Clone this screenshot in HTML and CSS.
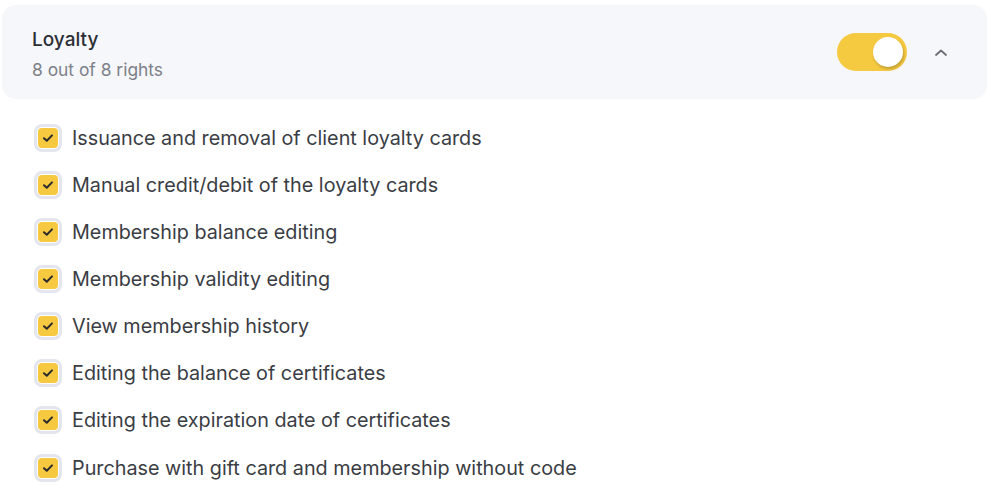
FILE: index.html
```html
<!DOCTYPE html>
<html>
<head>
<meta charset="utf-8">
<link rel="stylesheet" href="styles.css">
</head>
<body>
<div class="group">
  <div class="header">
    <div class="titles">
      <div class="title">Loyalty</div>
      <div class="subtitle">8 out of 8 rights</div>
    </div>
    <div class="controls">
      <div class="toggle"><div class="knob"></div></div>
      <svg class="chevron" width="14" height="9" viewBox="0 0 14 9"><path d="M2 7 L7 2.5 L12 7" fill="none" stroke="#6b6e76" stroke-width="1.8" stroke-linecap="round" stroke-linejoin="round"/></svg>
    </div>
  </div>
  <ul class="list">
    <li class="row"><span class="check"><span class="box"><svg width="12" height="10" viewBox="0 0 12 10"><path d="M2 5.2 L4.8 7.8 L10 2.4" fill="none" stroke="#2b2b2b" stroke-width="2" stroke-linecap="round" stroke-linejoin="round"/></svg></span></span><span class="label">Issuance and removal of client loyalty cards</span></li>
    <li class="row"><span class="check"><span class="box"><svg width="12" height="10" viewBox="0 0 12 10"><path d="M2 5.2 L4.8 7.8 L10 2.4" fill="none" stroke="#2b2b2b" stroke-width="2" stroke-linecap="round" stroke-linejoin="round"/></svg></span></span><span class="label">Manual credit/debit of the loyalty cards</span></li>
    <li class="row"><span class="check"><span class="box"><svg width="12" height="10" viewBox="0 0 12 10"><path d="M2 5.2 L4.8 7.8 L10 2.4" fill="none" stroke="#2b2b2b" stroke-width="2" stroke-linecap="round" stroke-linejoin="round"/></svg></span></span><span class="label">Membership balance editing</span></li>
    <li class="row"><span class="check"><span class="box"><svg width="12" height="10" viewBox="0 0 12 10"><path d="M2 5.2 L4.8 7.8 L10 2.4" fill="none" stroke="#2b2b2b" stroke-width="2" stroke-linecap="round" stroke-linejoin="round"/></svg></span></span><span class="label">Membership validity editing</span></li>
    <li class="row"><span class="check"><span class="box"><svg width="12" height="10" viewBox="0 0 12 10"><path d="M2 5.2 L4.8 7.8 L10 2.4" fill="none" stroke="#2b2b2b" stroke-width="2" stroke-linecap="round" stroke-linejoin="round"/></svg></span></span><span class="label">View membership history</span></li>
    <li class="row"><span class="check"><span class="box"><svg width="12" height="10" viewBox="0 0 12 10"><path d="M2 5.2 L4.8 7.8 L10 2.4" fill="none" stroke="#2b2b2b" stroke-width="2" stroke-linecap="round" stroke-linejoin="round"/></svg></span></span><span class="label">Editing the balance of certificates</span></li>
    <li class="row"><span class="check"><span class="box"><svg width="12" height="10" viewBox="0 0 12 10"><path d="M2 5.2 L4.8 7.8 L10 2.4" fill="none" stroke="#2b2b2b" stroke-width="2" stroke-linecap="round" stroke-linejoin="round"/></svg></span></span><span class="label">Editing the expiration date of certificates</span></li>
    <li class="row"><span class="check"><span class="box"><svg width="12" height="10" viewBox="0 0 12 10"><path d="M2 5.2 L4.8 7.8 L10 2.4" fill="none" stroke="#2b2b2b" stroke-width="2" stroke-linecap="round" stroke-linejoin="round"/></svg></span></span><span class="label">Purchase with gift card and membership without code</span></li>
  </ul>
</div>
</body>
</html>
```
FILE: styles.css
```css
html, body {
  margin: 0;
  padding: 0;
  background: #ffffff;
}
body {
  font-family: Inter, "Noto Sans", sans-serif;
  color: #33363d;
  width: 1000px;
  height: 500px;
  overflow: hidden;
}
.group {
  padding: 5px 13px 0 2px;
}
.header {
  display: flex;
  align-items: center;
  justify-content: space-between;
  background: #f6f7fa;
  border-radius: 14px;
  height: 94px;
  box-sizing: border-box;
  padding: 0 39px 0 30px;
}
.titles {
  align-self: flex-start;
  display: flex;
  flex-direction: column;
  gap: 6px;
  padding-top: 23px;
}
.title {
  font-size: 19px;
  font-weight: 500;
  line-height: 24px;
  color: #2b2e35;
}
.subtitle {
  font-size: 17.4px;
  line-height: 24px;
  color: #7d8089;
}
.controls {
  display: flex;
  align-items: center;
  gap: 27px;
}
.toggle {
  width: 70px;
  height: 38px;
  border-radius: 19px;
  background: #f5c940;
  box-sizing: border-box;
  padding: 4px;
  display: flex;
  justify-content: flex-end;
}
.knob {
  width: 30px;
  height: 30px;
  border-radius: 50%;
  background: #ffffff;
  box-shadow: 1px 2px 3px rgba(0, 0, 0, 0.22);
}
.chevron {
  display: block;
}
.list {
  list-style: none;
  margin: 15px 0 0 0;
  padding: 0 0 0 32px;
}
.row {
  display: flex;
  align-items: center;
  gap: 10px;
  height: 47.15px;
}
.check {
  width: 28px;
  height: 28px;
  box-sizing: border-box;
  border: 3.5px solid #e4e6ee;
  border-radius: 8px;
  display: flex;
  align-items: center;
  justify-content: center;
  background: #fff;
}
.box {
  width: 20px;
  height: 20px;
  border-radius: 4px;
  background: #f6c940;
  display: flex;
  align-items: center;
  justify-content: center;
}
.box svg {
  display: block;
}
.label {
  font-size: 19.8px;
  color: #3a3d44;
}
```
